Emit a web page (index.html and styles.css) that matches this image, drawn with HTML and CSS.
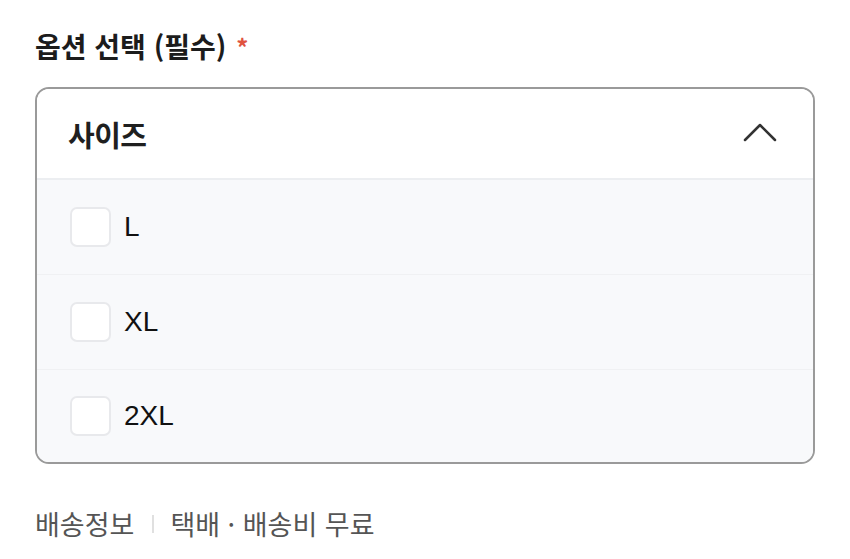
FILE: index.html
```html
<!DOCTYPE html>
<html lang="ko">
<head>
<meta charset="utf-8">
<link rel="stylesheet" href="styles.css">
</head>
<body>
<div class="page">
  <div class="title">옵션 선택 (필수) <span class="req">*</span></div>
  <div class="box">
    <div class="head">
      <span class="head-label">사이즈</span>
      <svg class="chev" width="34" height="20" viewBox="0 0 34 20"><path d="M2 18 L17 3 L32 18" fill="none" stroke="#333" stroke-width="2.5" stroke-linecap="round" stroke-linejoin="round"/></svg>
    </div>
    <div class="list">
      <label class="row"><span class="cb"></span><span class="opt">L</span></label>
      <label class="row"><span class="cb"></span><span class="opt">XL</span></label>
      <label class="row"><span class="cb"></span><span class="opt">2XL</span></label>
    </div>
  </div>
  <div class="ship">
    <span class="ship-k">배송정보</span>
    <span class="sep"></span>
    <span class="ship-v">택배 · 배송비 무료</span>
  </div>
</div>
</body>
</html>
```
FILE: styles.css
```css
* { box-sizing: border-box; }
body {
  margin: 0;
  background: #fff;
  font-family: "Noto Sans CJK KR", "Noto Sans", sans-serif;
  color: #1a1a1a;
}
.page {
  padding: 27px 35px 0 35px;
  width: 850px;
}
.title {
  font-size: 28px;
  font-weight: 700;
  line-height: 38px;
  color: #1c1c1c;
}
.req {
  color: #e0533f;
  font-size: 24px;
  margin-left: 2px;
  vertical-align: 1px;
}
.box {
  margin-top: 21px;
  width: 780px;
  border: 2px solid #9a9a9a;
  border-radius: 14px;
  overflow: hidden;
}
.head {
  height: 91px;
  display: flex;
  align-items: center;
  justify-content: space-between;
  padding: 0 36px 0 31px;
  background: #fff;
  border-bottom: 2px solid #eceef1;
}
.head-label {
  font-size: 29px;
  font-weight: 700;
  color: #1f1f1f;
  letter-spacing: -0.5px;
}
.chev { margin-top: -4px; }
.list { background: #f8f9fb; }
.row {
  height: 95px;
  display: flex;
  align-items: center;
  padding-left: 33px;
  border-top: 1px solid #f0f1f3;
}
.row:first-child { border-top: none; height: 94px; }
.row:last-child { height: 93px; }
.cb {
  width: 41px;
  height: 40px;
  border: 2px solid #e8e9ec;
  border-radius: 7px;
  background: #fff;
  margin-right: 13px;
}
.opt {
  font-size: 28px;
  color: #111;
  font-family: "Liberation Sans", "Noto Sans", sans-serif;
}
.ship {
  margin-top: 40px;
  display: flex;
  align-items: center;
  font-size: 27px;
  color: #555;
}
.sep {
  width: 2px;
  height: 18px;
  background: #e0e0e0;
  margin: 0 16px 0 18px;
}
.ship-v { color: #555; }
```
